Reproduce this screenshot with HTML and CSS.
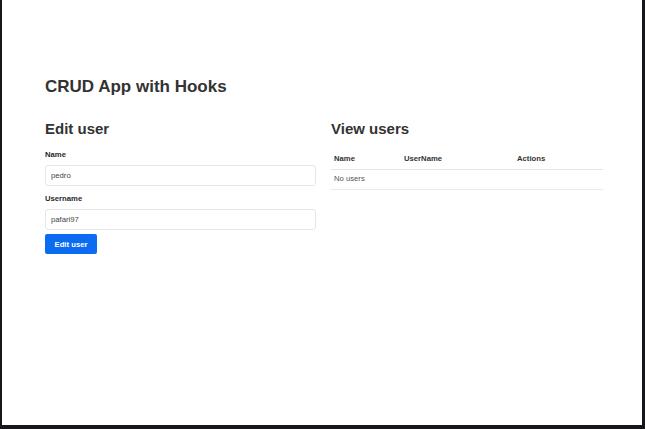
FILE: index.html
```html
<!DOCTYPE html>
<html>
<head>
<meta charset="utf-8">
<link rel="stylesheet" href="styles.css">
</head>
<body>
<div class="frame">
  <div class="app">
    <h1 class="title">CRUD App with Hooks</h1>
    <div class="row">
      <div class="col">
        <h2 class="heading">Edit user</h2>
        <form class="form">
          <label class="label">Name</label>
          <input class="input" type="text" value="pedro">
          <label class="label label-second">Username</label>
          <input class="input" type="text" value="pafari97">
          <button class="btn" type="button">Edit user</button>
        </form>
      </div>
      <div class="col col-right">
        <h2 class="heading">View users</h2>
        <table class="table">
          <colgroup>
            <col class="c1"><col class="c2"><col class="c3">
          </colgroup>
          <thead>
            <tr><th>Name</th><th>UserName</th><th>Actions</th></tr>
          </thead>
          <tbody>
            <tr><td colspan="3">No users</td></tr>
          </tbody>
        </table>
      </div>
    </div>
  </div>
</div>
</body>
</html>
```
FILE: styles.css
```css
* { box-sizing: border-box; }
html, body { margin: 0; padding: 0; background: #16171d; }
body { font-family: "Liberation Sans", Arial, sans-serif; color: #333; }
.frame {
  height: 429px;
  background: #fff;
  border-left: 2px solid #16171d;
  border-right: 3px solid #16171d;
  border-bottom: 4px solid #16171d;
}
.app { padding: 77px 0 0 43px; }
.title {
  margin: 0;
  font-size: 17px;
  line-height: 20px;
  font-weight: 700;
  color: #333;
}
.row { display: flex; gap: 15px; margin-top: 23px; }
.col { width: 271px; }
.col-right { width: 272px; }
.heading {
  margin: 0;
  font-size: 15px;
  line-height: 18px;
  font-weight: 700;
  color: #333;
}
.form { display: flex; flex-direction: column; align-items: flex-start; margin-top: 12px; }
.label {
  font-size: 7.7px;
  line-height: 10px;
  font-weight: 700;
  color: #2a2a2a;
  margin-bottom: 5px;
}
.label-second { margin-top: 8px; }
.input {
  width: 271px;
  height: 21px;
  margin: 0;
  padding: 0 5px;
  border: 1px solid #e4e6e9;
  border-radius: 3px;
  font-family: "Liberation Sans", Arial, sans-serif;
  font-size: 7.7px;
  color: #444;
  background: #fff;
  outline: none;
}
.btn {
  margin-top: 4px;
  width: 52px;
  height: 20px;
  padding: 0;
  border: none;
  border-radius: 2px;
  background: #0b6cf2;
  color: #fff;
  font-family: "Liberation Sans", Arial, sans-serif;
  font-size: 7.7px;
  font-weight: 700;
}
.table {
  margin-top: 11px;
  width: 272px;
  border-collapse: collapse;
  table-layout: fixed;
  font-size: 7.7px;
  line-height: 10px;
}
.c1 { width: 70px; }
.c2 { width: 113px; }
.c3 { width: 89px; }
.table th {
  text-align: left;
  font-weight: 700;
  color: #333;
  padding: 5px 3px 5px;
  border-bottom: 1px solid #e2e4e7;
}
.table td {
  color: #555;
  padding: 4px 3px 5px;
  border-bottom: 1px solid #e8eaed;
}
```
